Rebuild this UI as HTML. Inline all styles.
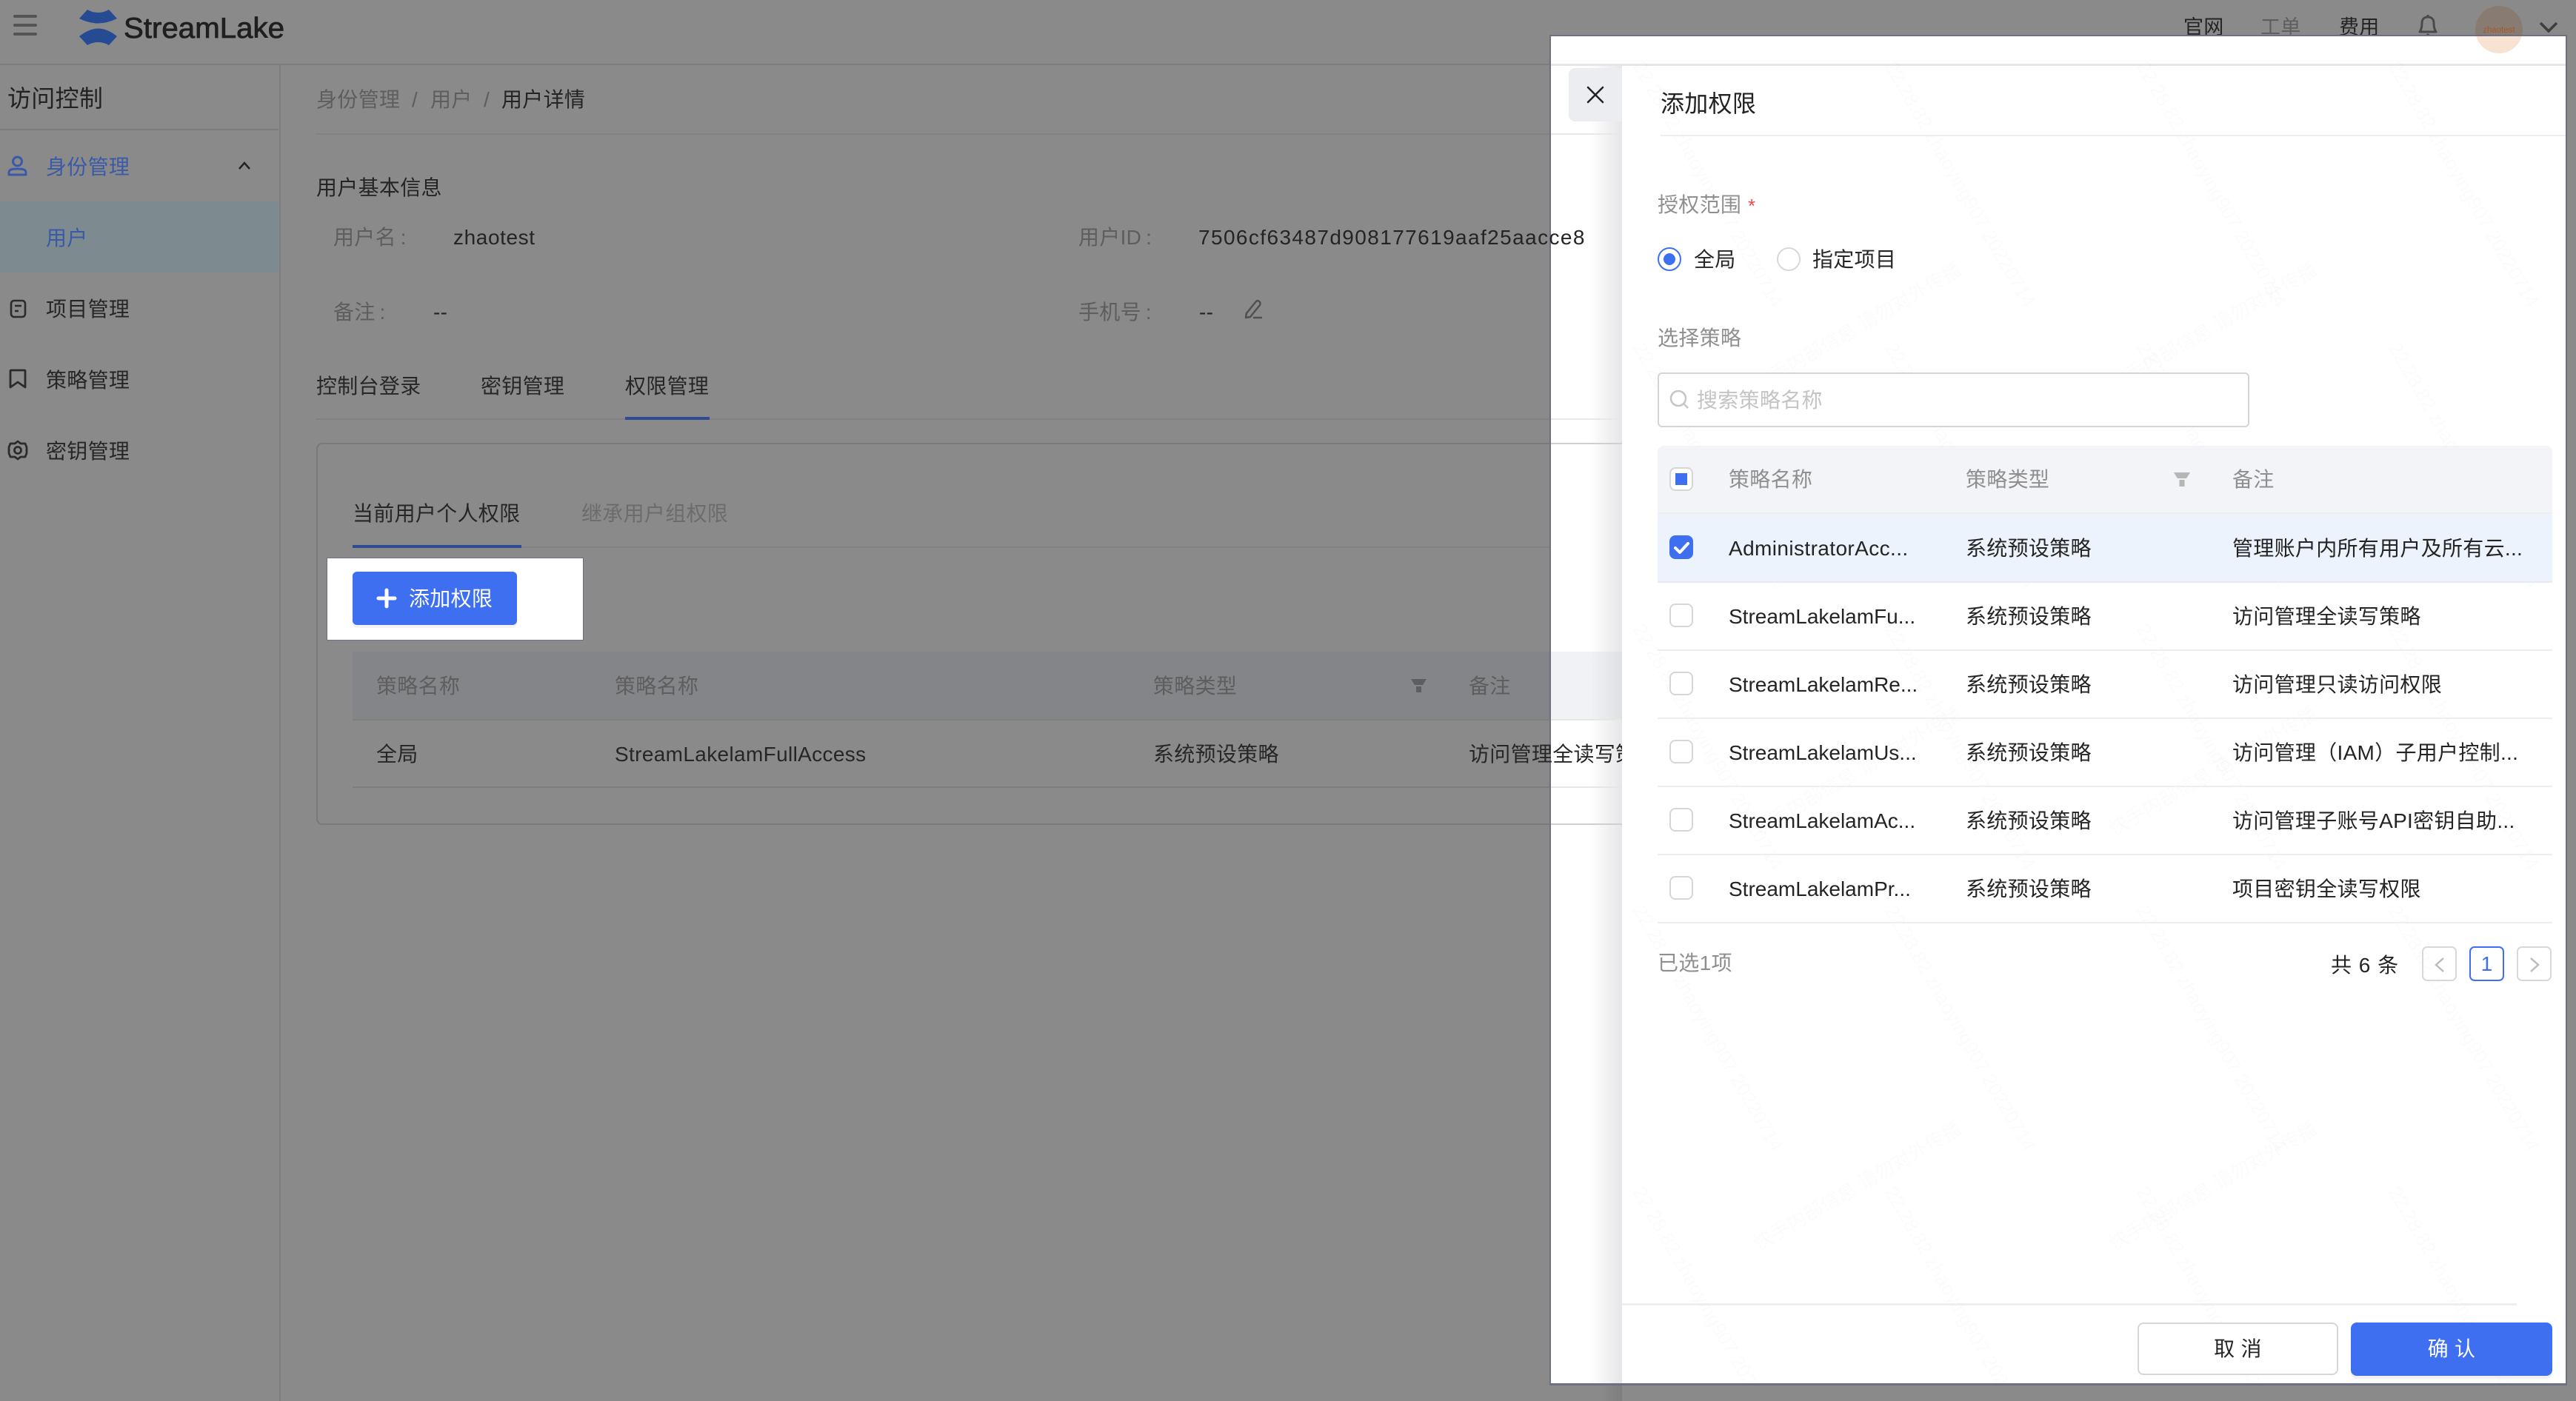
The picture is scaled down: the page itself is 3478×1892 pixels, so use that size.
<!DOCTYPE html>
<html lang="zh-CN"><head><meta charset="utf-8"><title>StreamLake 添加权限</title>
<style>
html,body{margin:0;padding:0;width:3478px;height:1892px;overflow:hidden;background:#8a8a8a}
body{position:relative;font-family:"Liberation Sans","Noto Sans CJK SC",sans-serif;font-size:28px;color:#262626}
.t{position:absolute;height:40px;line-height:40px;white-space:nowrap;margin-top:2px;letter-spacing:.3px}
.n{letter-spacing:0}
.b{position:absolute}
.g{color:#5e5e5e}.bl{color:#3a5aa8}.d{color:#242424}.l{color:#8f8f8f}
svg{position:absolute;overflow:visible}
.cb{position:absolute;left:2254px;width:32px;height:32px;box-sizing:border-box;border:2.5px solid #d6d6d6;border-radius:8px;background:#fff}
.ln{position:absolute;height:2px;background:#eee}
</style></head><body>
<!-- header -->
<div class="b" style="left:0;top:86px;width:2092px;height:2px;background:#7d7d7d"></div>
<div class="b" style="left:18px;top:20px;width:32px;height:4px;border-radius:2px;background:#555"></div>
<div class="b" style="left:18px;top:32px;width:32px;height:4px;border-radius:2px;background:#555"></div>
<div class="b" style="left:18px;top:44px;width:32px;height:4px;border-radius:2px;background:#555"></div>
<svg style="left:0;top:0" width="400" height="80">
<path d="M118 13Q132.500 21 147 13L158 25Q145 31.500 132.500 31.500Q120 31.500 107 25Z" fill="#274b93"/>
<path d="M118 61Q132.500 53 147 61L158 49Q145 38.500 132.500 38.500Q120 38.500 107 49Z" fill="#274b93"/>
<text x="167" y="51" font-family="Liberation Sans" font-size="39" textLength="217" lengthAdjust="spacingAndGlyphs" fill="#1f1f1f" stroke="#1f1f1f" stroke-width=".8">StreamLake</text>
</svg>
<div class="t d" style="left:2948px;top:15px;font-size:27px">官网</div>
<div class="t g" style="left:3052px;top:15px;font-size:27px">工单</div>
<div class="t d" style="left:3158px;top:15px;font-size:27px">费用</div>
<svg style="left:3262px;top:18px" width="32" height="36" fill="none" stroke="#4a4a4a" stroke-width="3"><path d="M5 25C8 21 8 16 8 13C8 8 11 5 16 5C21 5 24 8 24 13C24 16 24 21 27 25Z" stroke-linejoin="round"/><path d="M16 2V5"/><circle cx="16" cy="30" r="2.500" fill="#4a4a4a" stroke="none"/></svg>
<div class="b" style="left:3342px;top:8px;width:64px;height:64px;border-radius:50%;background:#887c72"></div>
<svg style="left:3428px;top:28px" width="26" height="18" fill="none" stroke="#3e3e3e" stroke-width="3.500"><path d="M2 3L13 14L24 3"/></svg>

<!-- sidebar -->
<div class="b" style="left:377px;top:88px;width:2px;height:1804px;background:#7e7e7e"></div>
<div class="t" style="left:10px;top:111px;font-size:32px;color:#222">访问控制</div>
<div class="b" style="left:0;top:174px;width:376px;height:2px;background:#7c7c7c"></div>
<svg style="left:8px;top:208px" width="32" height="32" fill="none" stroke="#3a5aa8" stroke-width="3"><circle cx="15.500" cy="10" r="6"/><path d="M4 28V25C4 21 8 20 15.500 20C23 20 27 21 27 25V28Z" stroke-linejoin="round"/></svg>
<div class="t bl" style="left:62px;top:204px">身份管理</div>
<svg style="left:320px;top:217px" width="20" height="14" fill="none" stroke="#222" stroke-width="2.500"><path d="M3 11L10 3L17 11"/></svg>
<div class="b" style="left:0;top:272px;width:376px;height:96px;background:#7d8a8f"></div>
<div class="t bl" style="left:62px;top:300px">用户</div>
<svg style="left:12px;top:403px" width="26" height="28" fill="none" stroke="#2b2b2b" stroke-width="2.600"><rect x="3" y="3" width="19" height="22" rx="4"/><path d="M8 10H17M8 17H13"/></svg>
<div class="t" style="left:62px;top:396px">项目管理</div>
<svg style="left:10px;top:497px" width="28" height="30" fill="none" stroke="#2b2b2b" stroke-width="2.800"><path d="M4 4Q4 3 5 3H23Q24 3 24 4V26L14 19L4 26Z" stroke-linejoin="round"/></svg>
<div class="t" style="left:62px;top:492px">策略管理</div>
<svg style="left:9px;top:593px" width="30" height="30" fill="none" stroke="#2b2b2b" stroke-width="2.800"><path d="M15 3L19 6L25 6L27 11L27 19L25 24L19 24L15 27L11 24L5 24L3 19L3 11L5 6L11 6Z" stroke-linejoin="round"/><circle cx="15" cy="15" r="4.500"/></svg>
<div class="t" style="left:62px;top:588px">密钥管理</div>

<!-- breadcrumb -->
<div class="t g" style="left:427px;top:113px">身份管理</div>
<div class="t g" style="left:556px;top:113px">/</div>
<div class="t g" style="left:581px;top:113px">用户</div>
<div class="t g" style="left:653px;top:113px">/</div>
<div class="t d" style="left:677px;top:113px">用户详情</div>
<div class="b" style="left:426px;top:180px;width:1666px;height:2px;background:#828282"></div>

<div class="t d" style="left:427px;top:232px">用户基本信息</div>
<div class="t g" style="left:450px;top:299px">用户名&thinsp;:</div>
<div class="t d" style="left:612px;top:299px;letter-spacing:.6px">zhaotest</div>
<div class="t g" style="left:450px;top:400px">备注&thinsp;:</div>
<div class="t d" style="left:585px;top:400px">--</div>
<div class="t g" style="left:1456px;top:299px">用户ID&thinsp;:</div>
<div class="t g" style="left:1456px;top:400px">手机号&thinsp;:</div>
<div class="t d" style="left:1619px;top:400px">--</div>
<svg style="left:1678px;top:403px" width="30" height="30" fill="none" stroke="#505050" stroke-width="2.500"><path d="M4 26L5 20L18 4Q20 2 22 4L23 5Q24 7 23 9L10 25L4 26Z" stroke-linejoin="round"/><path d="M14 26H26"/></svg>

<!-- tabs -->
<div class="t" style="left:427px;top:500px">控制台登录</div>
<div class="t" style="left:649px;top:500px">密钥管理</div>
<div class="t" style="left:844px;top:500px">权限管理</div>
<div class="b" style="left:426px;top:565px;width:1666px;height:2px;background:#828282"></div>
<div class="b" style="left:844px;top:563px;width:114px;height:4px;background:#2f4b93"></div>

<!-- card -->
<div class="b" style="left:427px;top:598px;width:1800px;height:516px;box-sizing:border-box;border:2px solid #7a7a7a;border-radius:8px"></div>
<div class="t" style="left:476px;top:672px">当前用户个人权限</div>
<div class="t" style="left:785px;top:672px;color:#6c6c6c">继承用户组权限</div>
<div class="b" style="left:476px;top:738px;width:1616px;height:2px;background:#828282"></div>
<div class="b" style="left:476px;top:736px;width:228px;height:4px;background:#2f4b93"></div>
<div class="b" style="left:441px;top:753px;width:347px;height:112px;box-sizing:border-box;border:1.500px solid #6c7080;background:#fff"></div>
<div class="b" style="left:476px;top:772px;width:222px;height:72px;border-radius:6px;background:#3d6ff0;box-shadow:0 4px 0 #f3f3f3"></div>
<svg style="left:508px;top:794px" width="28" height="28" stroke="#fff" stroke-width="5" stroke-linecap="round"><path d="M14 3V25M3 14H25"/></svg>
<div class="t" style="left:552px;top:787px;color:#fff">添加权限</div>

<div class="b" style="left:476px;top:880px;width:1616px;height:91px;background:#848588"></div>
<div class="b" style="left:476px;top:971px;width:1616px;height:2px;background:#7e7e7e"></div>
<div class="t g" style="left:508px;top:905px">策略名称</div>
<div class="t g" style="left:830px;top:905px">策略名称</div>
<div class="t g" style="left:1557px;top:905px">策略类型</div>
<svg style="left:1904px;top:916px" width="24" height="22" fill="#5c5e62"><path d="M1 1H22L17 9H6Z"/><rect x="8" y="11" width="7" height="8"/></svg>
<div class="t g" style="left:1983px;top:905px">备注</div>
<div class="t" style="left:508px;top:997px">全局</div>
<div class="t" style="left:830px;top:997px;letter-spacing:.35px">StreamLakelamFullAccess</div>
<div class="t" style="left:1557px;top:997px">系统预设策略</div>
<div class="b" style="left:476px;top:1062px;width:1616px;height:2px;background:#7e7e7e"></div>

<!-- drawer outline + white backdrop -->
<div class="b" style="left:2092px;top:47px;width:1374px;height:1824px;box-sizing:border-box;border:solid #6c7080;border-width:2px 2px 3px 2px;background:#fff"></div>
<!-- strip left of panel -->
<div class="b" style="left:2094px;top:88px;width:96px;height:1780px;background:linear-gradient(90deg,#fff 0,#fff 55%,#e6e6e8 100%)"></div>
<div class="b" style="left:2094px;top:86px;width:1370px;height:3px;background:#e6e6e6"></div>
<div class="b" style="left:2118px;top:92px;width:72px;height:72px;border-radius:8px 0 0 8px;background:#ebedf1"></div>
<svg style="left:2140px;top:114px" width="28" height="28" stroke="#222" stroke-width="2.500" stroke-linecap="round"><path d="M4 4L24 24M24 4L4 24"/></svg>
<div class="ln" style="left:2094px;top:180px;width:96px;background:#e8e8e8"></div>
<div class="ln" style="left:2094px;top:565px;width:96px;background:#e8e8e8"></div>
<div class="ln" style="left:2094px;top:598px;width:96px;background:#cfcfd4"></div>
<div class="b" style="left:2094px;top:880px;width:96px;height:91px;background:linear-gradient(90deg,#f1f2f6 0,#f1f2f6 55%,#dfe0e4 100%)"></div>
<div class="ln" style="left:2094px;top:971px;width:96px;background:#e6e6e6"></div>
<div class="ln" style="left:2094px;top:1062px;width:96px;background:#e6e6e6"></div>
<div class="ln" style="left:2094px;top:1112px;width:96px;background:#cfcfd4"></div>
<!-- clipped overlapping text -->
<div class="t d" style="left:1618px;top:299px;letter-spacing:1.4px">7506cf63487d908177619aaf25aacce8</div>
<div class="b" style="left:1983px;top:999px;width:207px;height:40px;overflow:hidden"><div class="t" style="left:0;top:-2px">访问管理全读写策略</div></div>
<!-- avatar lower part -->
<div class="b" style="left:3342px;top:49px;width:64px;height:23px;overflow:hidden"><div class="b" style="left:0;top:-41px;width:64px;height:64px;border-radius:50%;background:#f8e2d2"></div></div>
<div class="t n" style="left:3342px;top:19px;width:64px;text-align:center;font-size:11.500px;color:#a2582c">zhaotest</div>
<!-- panel -->
<div class="b" style="left:2190px;top:89px;width:1274px;height:1779px;background:#fff"></div>
<!-- watermark -->
<svg style="left:2094px;top:49px" width="1370" height="1819" viewBox="0 0 1370 1819">
<clipPath id="c"><rect width="1370" height="1819"/></clipPath>
<g clip-path="url(#c)" font-family="Liberation Sans,Noto Sans CJK SC,sans-serif" font-size="26" fill="#000" fill-opacity=".016">
<text transform="translate(110 40) rotate(60)">22.28.82 zhaoying907 20220714</text>
<text transform="translate(450 40) rotate(60)">22.28.82 zhaoying907 20220714</text>
<text transform="translate(790 40) rotate(60)">22.28.82 zhaoying907 20220714</text>
<text transform="translate(1130 40) rotate(60)">22.28.82 zhaoying907 20220714</text>
<text transform="translate(110 420) rotate(60)">22.28.82 zhaoying907 20220714</text>
<text transform="translate(450 420) rotate(60)">22.28.82 zhaoying907 20220714</text>
<text transform="translate(790 420) rotate(60)">22.28.82 zhaoying907 20220714</text>
<text transform="translate(1130 420) rotate(60)">22.28.82 zhaoying907 20220714</text>
<text transform="translate(110 800) rotate(60)">22.28.82 zhaoying907 20220714</text>
<text transform="translate(450 800) rotate(60)">22.28.82 zhaoying907 20220714</text>
<text transform="translate(790 800) rotate(60)">22.28.82 zhaoying907 20220714</text>
<text transform="translate(1130 800) rotate(60)">22.28.82 zhaoying907 20220714</text>
<text transform="translate(110 1180) rotate(60)">22.28.82 zhaoying907 20220714</text>
<text transform="translate(450 1180) rotate(60)">22.28.82 zhaoying907 20220714</text>
<text transform="translate(790 1180) rotate(60)">22.28.82 zhaoying907 20220714</text>
<text transform="translate(1130 1180) rotate(60)">22.28.82 zhaoying907 20220714</text>
<text transform="translate(110 1560) rotate(60)">22.28.82 zhaoying907 20220714</text>
<text transform="translate(450 1560) rotate(60)">22.28.82 zhaoying907 20220714</text>
<text transform="translate(790 1560) rotate(60)">22.28.82 zhaoying907 20220714</text>
<text transform="translate(1130 1560) rotate(60)">22.28.82 zhaoying907 20220714</text>
<text transform="translate(280 480) rotate(-30)">快手内部信息 请勿对外传播</text>
<text transform="translate(760 480) rotate(-30)">快手内部信息 请勿对外传播</text>
<text transform="translate(280 1080) rotate(-30)">快手内部信息 请勿对外传播</text>
<text transform="translate(760 1080) rotate(-30)">快手内部信息 请勿对外传播</text>
<text transform="translate(280 1640) rotate(-30)">快手内部信息 请勿对外传播</text>
<text transform="translate(760 1640) rotate(-30)">快手内部信息 请勿对外传播</text>
</g></svg>

<!-- panel content -->
<div class="t" style="left:2242px;top:118px;font-size:32px;color:#222">添加权限</div>
<div class="ln" style="left:2242px;top:182px;width:1222px"></div>
<div class="t l" style="left:2238px;top:255px">授权范围</div>
<div class="t" style="left:2360px;top:256px;font-size:26px;color:#ef4b4b">*</div>
<div class="b" style="left:2238px;top:334px;width:32px;height:32px;box-sizing:border-box;border:2.500px solid #3d6ff0;border-radius:50%;background:#fff"></div>
<div class="b" style="left:2246px;top:342px;width:16px;height:16px;border-radius:50%;background:#3d6ff0"></div>
<div class="t" style="left:2287px;top:329px">全局</div>
<div class="b" style="left:2399px;top:334px;width:32px;height:32px;box-sizing:border-box;border:2.500px solid #d8d8d8;border-radius:50%;background:#fff"></div>
<div class="t" style="left:2447px;top:329px">指定项目</div>
<div class="t l" style="left:2238px;top:435px">选择策略</div>
<div class="b" style="left:2238px;top:503px;width:799px;height:74px;box-sizing:border-box;border:2.500px solid #d4d4d4;border-radius:6px;background:#fff"></div>
<svg style="left:2254px;top:526px" width="28" height="28" fill="none" stroke="#c6c6c6" stroke-width="2.500"><circle cx="12" cy="12" r="10"/><path d="M19 19L25 25"/></svg>
<div class="t" style="left:2291px;top:519px;color:#c4c4c4">搜索策略名称</div>

<!-- policy table -->
<div class="b" style="left:2238px;top:602px;width:1208px;height:91px;border-radius:8px 8px 0 0;background:#f3f4f8"></div>
<div class="ln" style="left:2238px;top:692px;width:1208px"></div>
<div class="b" style="left:2238px;top:694px;width:1208px;height:91px;background:#ecf3fc"></div>
<div class="ln" style="left:2238px;top:785px;width:1208px;background:#e6ebf2"></div>
<div class="ln" style="left:2238px;top:877px;width:1208px"></div>
<div class="ln" style="left:2238px;top:969px;width:1208px"></div>
<div class="ln" style="left:2238px;top:1061px;width:1208px"></div>
<div class="ln" style="left:2238px;top:1153px;width:1208px"></div>
<div class="ln" style="left:2238px;top:1245px;width:1208px"></div>

<div class="cb" style="top:631px"></div>
<div class="b" style="left:2262px;top:639px;width:16px;height:16px;background:#3d6ff0"></div>
<div class="t l" style="left:2334px;top:626px">策略名称</div>
<div class="t l" style="left:2654px;top:626px">策略类型</div>
<svg style="left:2934px;top:637px" width="24" height="22" fill="#b6b6b6"><path d="M1 1H23L18 9H6Z"/><rect x="8.500" y="11" width="7" height="9"/></svg>
<div class="t l" style="left:3014px;top:626px">备注</div>

<div class="b" style="left:2254px;top:723px;width:32px;height:32px;border-radius:8px;background:#3d6ff0"></div>
<svg style="left:2254px;top:723px" width="32" height="32" fill="none" stroke="#fff" stroke-width="4" stroke-linecap="round" stroke-linejoin="round"><path d="M8 17L14 23L25 11"/></svg>
<div class="t d" style="left:2334px;top:719px;letter-spacing:.4px">AdministratorAcc...</div>
<div class="t d" style="left:2654px;top:719px">系统预设策略</div>
<div class="t d" style="left:3014px;top:719px">管理账户内所有用户及所有云...</div>

<div class="cb" style="top:815px"></div>
<div class="t d n" style="left:2334px;top:811px">StreamLakelamFu...</div>
<div class="t d" style="left:2654px;top:811px">系统预设策略</div>
<div class="t d" style="left:3014px;top:811px">访问管理全读写策略</div>

<div class="cb" style="top:907px"></div>
<div class="t d n" style="left:2334px;top:903px">StreamLakelamRe...</div>
<div class="t d" style="left:2654px;top:903px">系统预设策略</div>
<div class="t d" style="left:3014px;top:903px">访问管理只读访问权限</div>

<div class="cb" style="top:999px"></div>
<div class="t d n" style="left:2334px;top:995px">StreamLakelamUs...</div>
<div class="t d" style="left:2654px;top:995px">系统预设策略</div>
<div class="t d" style="left:3014px;top:995px">访问管理（IAM）子用户控制...</div>

<div class="cb" style="top:1091px"></div>
<div class="t d n" style="left:2334px;top:1087px">StreamLakelamAc...</div>
<div class="t d" style="left:2654px;top:1087px">系统预设策略</div>
<div class="t d" style="left:3014px;top:1087px">访问管理子账号API密钥自助...</div>

<div class="cb" style="top:1183px"></div>
<div class="t d n" style="left:2334px;top:1179px">StreamLakelamPr...</div>
<div class="t d" style="left:2654px;top:1179px">系统预设策略</div>
<div class="t d" style="left:3014px;top:1179px">项目密钥全读写权限</div>

<div class="t l" style="left:2238px;top:1279px">已选1项</div>
<div class="t d" style="left:3147px;top:1282px;letter-spacing:1px">共 6 条</div>
<div class="b" style="left:3270px;top:1278px;width:47px;height:47px;box-sizing:border-box;border:2px solid #d8d8d8;border-radius:7px"></div>
<svg style="left:3286px;top:1292px" width="16" height="22" fill="none" stroke="#bcbcbc" stroke-width="2.500"><path d="M13 2L3 11L13 20"/></svg>
<div class="b" style="left:3334px;top:1278px;width:47px;height:47px;box-sizing:border-box;border:2px solid #3d6ff0;border-radius:7px"></div>
<div class="t" style="left:3334px;top:1280px;width:47px;text-align:center;color:#3d6ff0">1</div>
<div class="b" style="left:3398px;top:1278px;width:47px;height:47px;box-sizing:border-box;border:2px solid #d8d8d8;border-radius:7px"></div>
<svg style="left:3414px;top:1292px" width="16" height="22" fill="none" stroke="#bcbcbc" stroke-width="2.500"><path d="M3 2L13 11L3 20"/></svg>

<!-- footer -->
<div class="ln" style="left:2190px;top:1760px;width:1208px;height:3px"></div>
<div class="b" style="left:2886px;top:1786px;width:271px;height:71px;box-sizing:border-box;border:2.500px solid #d6d6d6;border-radius:8px;background:#fff"></div>
<div class="t d" style="left:2886px;top:1800px;width:271px;text-align:center">取 消</div>
<div class="b" style="left:3174px;top:1786px;width:272px;height:72px;border-radius:8px;background:#3d6ff0;box-shadow:0 4px 0 #f1f1f1"></div>
<div class="t" style="left:3174px;top:1800px;width:272px;text-align:center;color:#fff">确 认</div>
<!-- shadow strip below panel -->
<div class="b" style="left:2160px;top:1871px;width:30px;height:21px;background:linear-gradient(90deg,#8a8a8a,#7e7e7e)"></div>
</body></html>
